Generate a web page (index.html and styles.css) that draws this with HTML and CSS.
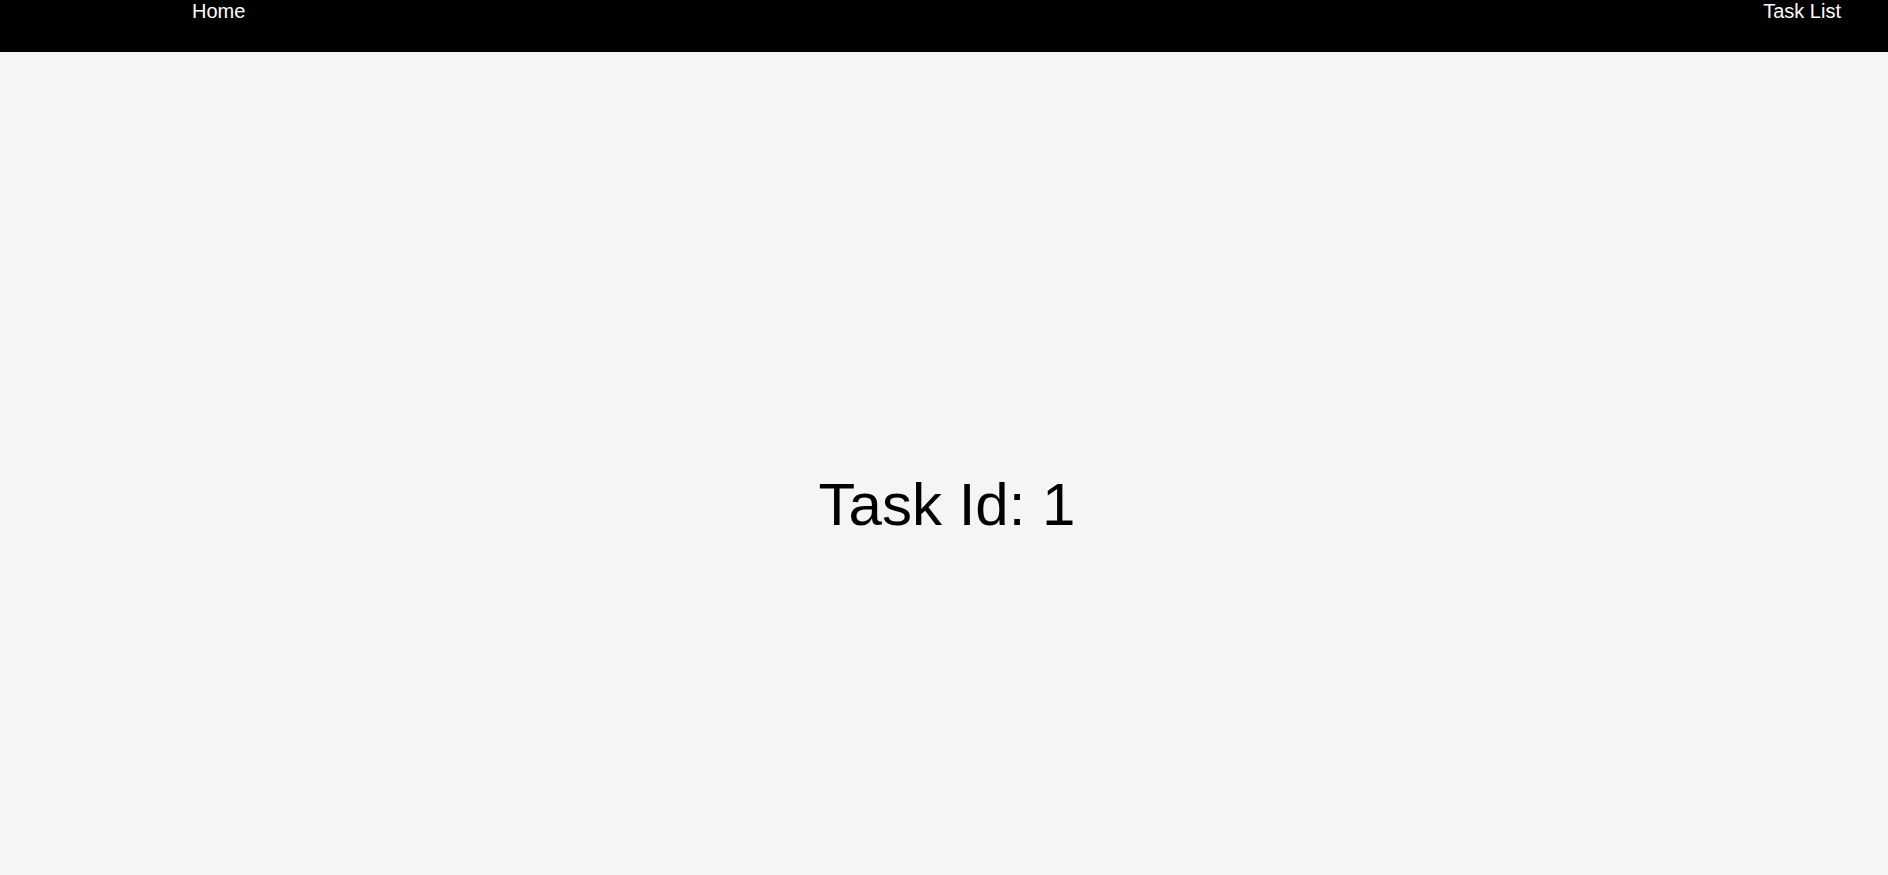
FILE: index.html
```html
<!DOCTYPE html>
<html lang="en">
<head>
<meta charset="utf-8">
<title>Task</title>
<link rel="stylesheet" href="styles.css">
</head>
<body>
<header class="nav">
  <a class="nav-link" href="#">Home</a>
  <a class="nav-link" href="#">Task List</a>
</header>
<main class="main">
  <h1 class="title">Task Id: 1</h1>
</main>
</body>
</html>
```
FILE: styles.css
```css
html, body {
  margin: 0;
  padding: 0;
}
body {
  font-family: "Liberation Sans", Arial, sans-serif;
  background: #f4f5f7;
  color: #000;
  overflow: hidden;
}
.nav {
  height: 52px;
  background: #000;
  display: flex;
  justify-content: space-between;
  align-items: flex-start;
  padding: 0 47px 0 192px;
}
.nav-link {
  color: #fff;
  text-decoration: none;
  font-size: 20px;
  line-height: 23px;
}
.main {
  height: 823px;
  box-sizing: border-box;
  padding: 82px 0 0 6px;
  display: flex;
  align-items: center;
  justify-content: center;
}
.title {
  margin: 0;
  font-size: 60px;
  font-weight: 400;
  line-height: 69px;
}
```
